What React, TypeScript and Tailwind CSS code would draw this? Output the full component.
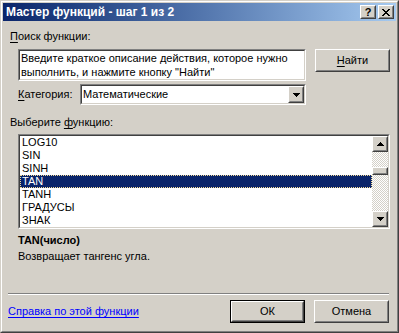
import type { ReactNode } from "react";

const font = "font-['Liberation_Sans',Arial,sans-serif]";

function Raised({ className = "", children }: { className?: string; children?: ReactNode }) {
  return (
    <div
      className={`border border-t-white border-l-white border-r-[#404040] border-b-[#404040] bg-[#d4d0c8] ${className}`}
    >
      <div className="flex h-full w-full items-center justify-center border border-t-[#d4d0c8] border-l-[#d4d0c8] border-r-[#808080] border-b-[#808080]">
        {children}
      </div>
    </div>
  );
}

function Sunken({ className = "", children }: { className?: string; children?: ReactNode }) {
  return (
    <div
      className={`border border-t-[#808080] border-l-[#808080] border-r-white border-b-white ${className}`}
    >
      <div className="flex h-full w-full border border-t-[#404040] border-l-[#404040] border-r-[#d4d0c8] border-b-[#d4d0c8] bg-white">
        {children}
      </div>
    </div>
  );
}

function Arrow({ up = false }: { up?: boolean }) {
  return (
    <svg width="7" height="4" viewBox="0 0 7 4" shapeRendering="crispEdges">
      {up ? (
        <polygon points="3.5,0 7,4 0,4" fill="#000" />
      ) : (
        <polygon points="0,0 7,0 3.5,4" fill="#000" />
      )}
    </svg>
  );
}

const items = ["LOG10", "SIN", "SINH", "TAN", "TANH", "ГРАДУСЫ", "ЗНАК"];

export default function App() {
  return (
    <div className={`${font} h-[333px] w-[399px] text-[11px] text-black`}>
      <div className="h-full w-full border border-t-[#d4d0c8] border-l-[#d4d0c8] border-r-[#404040] border-b-[#404040]">
        <div className="flex h-full w-full flex-col border border-t-white border-l-white border-r-[#808080] border-b-[#808080] bg-[#d4d0c8] p-px">
          {/* заголовок */}
          <div className="flex h-[18px] shrink-0 items-center bg-linear-to-r from-[#0a246a] to-[#a6caf0] pl-[3px] pr-[2px]">
            <span className="flex-1 text-[12px] font-bold leading-none text-white">
              Мастер функций - шаг 1 из 2
            </span>
            <Raised className="h-[14px] w-[16px]">
              <span className="text-[11px] font-bold leading-none">?</span>
            </Raised>
            <Raised className="ml-[2px] h-[14px] w-[16px]">
              <svg width="8" height="7" viewBox="0 0 8 7" shapeRendering="crispEdges">
                <path d="M0 0h2v1h1v1h2V1h1V0h2v1H7v1H6v1H5v1h1v1h1v1h1v1H6V6H5V5H3v1H2v1H0V6h1V5h1V4h1V3H2V2H1V1H0z" fill="#000" />
              </svg>
            </Raised>
          </div>

          {/* тело */}
          <div className="flex flex-1 flex-col leading-[13px]">
            <div className="ml-[7px] mt-[9px] h-[13px]">
              <span className="underline underline-offset-2">П</span>оиск функции:
            </div>

            <div className="ml-[15px] mt-[6px] flex items-start">
              <Sunken className="h-[32px] w-[288px]">
                <div className="pl-[1px] leading-[14px]">
                  Введите краткое описание действия, которое нужно
                  <br />
                  выполнить, и нажмите кнопку "Найти"
                </div>
              </Sunken>
              <Raised className="ml-[9px] h-[23px] w-[75px]">
                <span>
                  <span className="underline underline-offset-2">Н</span>айти
                </span>
              </Raised>
            </div>

            <div className="ml-[15px] mt-[3px] flex items-center">
              <div className="w-[62px]">
                <span className="underline underline-offset-2">К</span>атегория:
              </div>
              <Sunken className="h-[21px] w-[226px]">
                <div className="flex flex-1 items-center pl-[1px]">Математические</div>
                <Raised className="h-[17px] w-[16px]">
                  <Arrow />
                </Raised>
              </Sunken>
            </div>

            <div className="ml-[7px] mt-[11px] h-[13px]">
              Выберите <span className="underline underline-offset-2">ф</span>ункцию:
            </div>

            <Sunken className="ml-[15px] mt-[5px] h-[95px] w-[372px]">
              <div className="flex flex-1 flex-col">
                {items.map((it) =>
                  it === "TAN" ? (
                    <div
                      key={it}
                      className="h-[13px] bg-[#0a246a] pl-[2px] leading-[13px] text-white outline-1 -outline-offset-1 outline-dotted outline-[#f5db95]"
                    >
                      {it}
                    </div>
                  ) : (
                    <div key={it} className="h-[13px] pl-[2px] leading-[13px]">
                      {it}
                    </div>
                  )
                )}
              </div>
              <div className="flex w-[16px] flex-col">
                <Raised className="h-[16px] w-[16px]">
                  <Arrow up />
                </Raised>
                <div className="flex flex-1 flex-col bg-[repeating-conic-gradient(#ffffff_0_25%,#d4d0c8_0_50%)] bg-[length:2px_2px]">
                  <div className="h-[15px]" />
                  <Raised className="h-[8px] w-[16px]" />
                </div>
                <Raised className="h-[16px] w-[16px]">
                  <Arrow />
                </Raised>
              </div>
            </Sunken>

            <div className="ml-[15px] mt-[5px] h-[13px] font-bold">TAN(число)</div>
            <div className="ml-[15px] mt-[3px] h-[13px]">Возвращает тангенс угла.</div>

            <div className="ml-[5px] mt-[30px] h-[2px] w-[381px] border-t border-b border-t-[#808080] border-b-white" />

            <div className="ml-[5px] mt-[5px] flex items-center">
              <a href="#" className="flex-1 text-[#0000ff] underline underline-offset-2">
                Справка по этой функции
              </a>
              <div className="h-[23px] w-[75px] border border-black">
                <Raised className="h-full w-full">ОК</Raised>
              </div>
              <Raised className="ml-[9px] mr-[7px] h-[23px] w-[75px]">Отмена</Raised>
            </div>
          </div>
        </div>
      </div>
    </div>
  );
}
